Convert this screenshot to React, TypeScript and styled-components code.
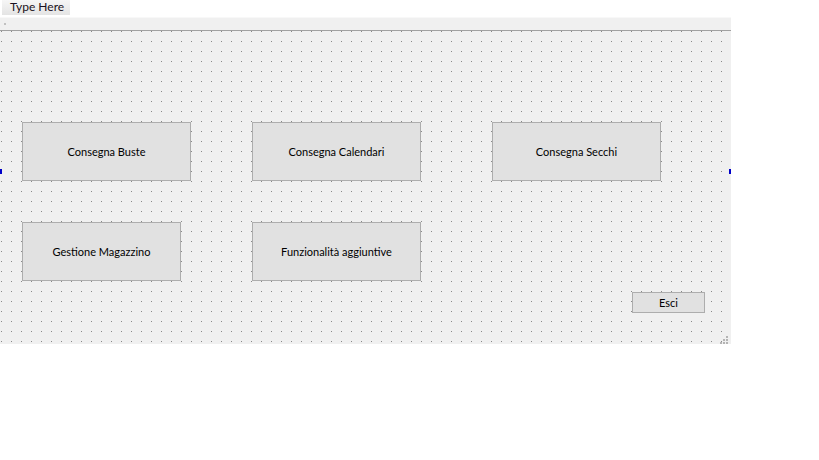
import React from "react";
import styled, { createGlobalStyle } from "styled-components";

const Global = createGlobalStyle`
  html, body { margin: 0; padding: 0; background: #ffffff; }
  body { font-family: "Lato", "Liberation Sans", sans-serif; }
`;

const dotTile =
  "data:image/svg+xml;utf8," +
  encodeURIComponent(
    '<svg xmlns="http://www.w3.org/2000/svg" width="10" height="10" shape-rendering="crispEdges"><rect x="1" y="0" width="1" height="1" fill="#8a8a8a"/></svg>'
  );

const Form = styled.div`
  width: 731px;
  display: flex;
  flex-direction: column;
  background: #ffffff;
`;

const MenuBar = styled.div`
  height: 17px;
  display: flex;
  align-items: flex-start;
  padding-left: 2px;
  background: #ffffff;
`;

const MenuItem = styled.div`
  width: 68px;
  height: 15px;
  box-sizing: border-box;
  padding-left: 8px;
  background: linear-gradient(#f6f6f6, #e4e4e4);
  font-family: "Lato", "Liberation Sans", sans-serif;
  font-size: 12px;
  line-height: 14px;
  color: #1a1020;
  white-space: nowrap;
`;

const ToolBar = styled.div`
  height: 12px;
  background: #f0f0f0;
  border-top: 1px solid #f8f8f8;
  display: flex;
  align-items: center;
  padding-left: 4px;
`;

const Grip = styled.div`
  width: 2px;
  height: 2px;
  background: #c0c0c0;
`;

const Canvas = styled.div`
  position: relative;
  height: 313px;
  border-top: 1px solid #a0a0a0;
  background-color: #f0f0f0;
  background-image: url("${dotTile}");
  background-size: 10px 10px;
  background-position: 0 0;
`;

const Button = styled.div`
  position: absolute;
  box-sizing: border-box;
  border: 1px solid #adadad;
  background: #e1e1e1;
  display: flex;
  align-items: center;
  justify-content: center;
  font-family: "Lato", "Liberation Sans", sans-serif;
  font-size: 11px;
  color: #000000;
`;

const Handle = styled.div<{ $side: "left" | "right" }>`
  position: absolute;
  top: 138px;
  ${(p) => (p.$side === "left" ? "left: 0;" : "right: 0;")}
  width: 2px;
  height: 5px;
  background: #0000c8;
`;

const SizeGrip = styled.svg`
  position: absolute;
  right: 3px;
  bottom: 0px;
`;

const buttons = [
  { label: "Consegna Buste", x: 22, y: 91, w: 169, h: 59 },
  { label: "Consegna Calendari", x: 252, y: 91, w: 169, h: 59 },
  { label: "Consegna Secchi", x: 492, y: 91, w: 169, h: 59 },
  { label: "Gestione Magazzino", x: 22, y: 191, w: 159, h: 59 },
  { label: "Funzionalità aggiuntive", x: 252, y: 191, w: 169, h: 59 },
  { label: "Esci", x: 632, y: 261, w: 73, h: 21 },
];

export default function App() {
  return (
    <>
      <Global />
      <Form>
        <MenuBar>
          <MenuItem>Type Here</MenuItem>
        </MenuBar>
        <ToolBar>
          <Grip />
        </ToolBar>
        <Canvas>
          {buttons.map((b) => (
            <Button
              key={b.label}
              style={{ left: b.x, top: b.y, width: b.w, height: b.h }}
            >
              {b.label}
            </Button>
          ))}
          <Handle $side="left" />
          <Handle $side="right" />
          <SizeGrip width="8" height="8" viewBox="0 0 8 8">
            <rect x="6" y="0" width="2" height="2" fill="#b4b4b4" />
            <rect x="3" y="3" width="2" height="2" fill="#b4b4b4" />
            <rect x="6" y="3" width="2" height="2" fill="#b4b4b4" />
            <rect x="0" y="6" width="2" height="2" fill="#b4b4b4" />
            <rect x="3" y="6" width="2" height="2" fill="#b4b4b4" />
            <rect x="6" y="6" width="2" height="2" fill="#b4b4b4" />
          </SizeGrip>
        </Canvas>
      </Form>
    </>
  );
}
